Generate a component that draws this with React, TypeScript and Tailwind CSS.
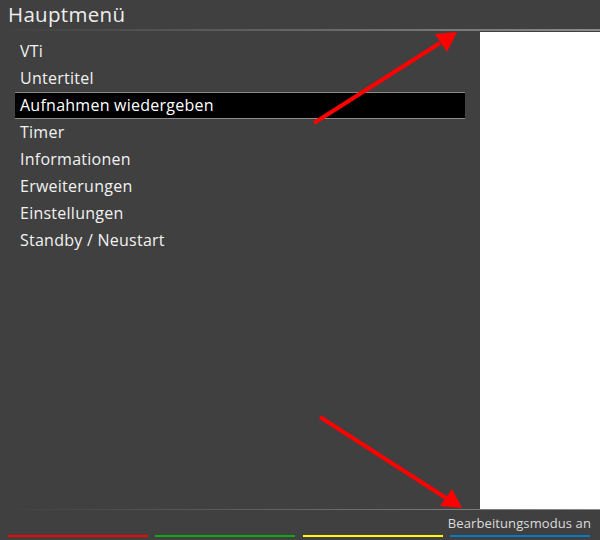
const ITEMS = [
  'VTi',
  'Untertitel',
  'Aufnahmen wiedergeben',
  'Timer',
  'Informationen',
  'Erweiterungen',
  'Einstellungen',
  'Standby / Neustart',
]

const SELECTED = 2

export default function App() {
  return (
    <div
      className="relative w-[600px] h-[540px] overflow-hidden bg-[#404040] text-[#f2f2f2] flex flex-col"
      style={{ fontFamily: '"Open Sans", "Liberation Sans", sans-serif' }}
    >
      {/* Header */}
      <div className="h-[29px] pl-2 flex items-center">
        <h1 className="text-[20.5px] leading-none tracking-[0.3px] text-[#eeeeee]">Hauptmenü</h1>
      </div>
      <div className="h-[1.5px] bg-gradient-to-r from-[#404040] to-[#8c8c8c]" />

      {/* Body */}
      <div className="flex flex-1 min-h-0 pt-[1px]">
        <div className="w-[480px] pt-[6px] pl-[15px]">
          <ul className="w-[450px]">
            {ITEMS.map((item, i) => (
              <li
                key={item}
                className={
                  i === SELECTED
                    ? 'h-[27px] pl-[5px] flex items-center bg-black border-y border-[#8a8a8a] text-[16px] tracking-[0.25px] text-white'
                    : 'h-[27px] pl-[5px] flex items-center text-[16px] tracking-[0.25px]'
                }
              >
                {item}
              </li>
            ))}
          </ul>
        </div>
        <div className="flex-1 bg-white" />
      </div>

      {/* Footer */}
      <div className="h-[1.5px] bg-gradient-to-r from-[#404040] to-[#8c8c8c]" />
      <div className="h-[30px] grid grid-cols-4 gap-x-[7.5px] pl-2 pr-[10px]">
        {[
          { color: 'bg-[#ff0000]', label: '' },
          { color: 'bg-[#12a812]', label: '' },
          { color: 'bg-[#ffff00]', label: '' },
          { color: 'bg-[#0a78c8]', label: 'Bearbeitungsmodus an' },
        ].map((b, i) => (
          <div key={i} className="flex flex-col justify-end pb-[3px] min-w-0">
            <div className="flex justify-end mb-[5px] -mr-[1px]">
              <span className="shrink-0 text-[13px] leading-none tracking-[0.1px] text-[#dcdcdc] whitespace-nowrap">
                {b.label}
              </span>
            </div>
            <div className={`h-[2.5px] ${b.color}`} />
          </div>
        ))}
      </div>

      {/* Annotation arrows */}
      <svg className="absolute inset-0 pointer-events-none" width="600" height="540" viewBox="0 0 600 540">
        <line x1="314" y1="123" x2="440" y2="43" stroke="#ff0000" strokeWidth="4" />
        <polygon points="457,32 435,34 447,52" fill="#ff0000" />
        <line x1="320" y1="417" x2="446" y2="498" stroke="#ff0000" strokeWidth="4" />
        <polygon points="462,508 440,506 452,489" fill="#ff0000" />
      </svg>
    </div>
  )
}
